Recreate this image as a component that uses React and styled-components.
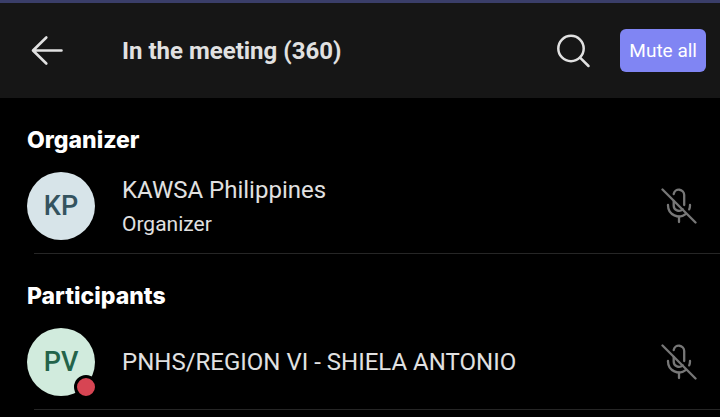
import React from "react";
import styled, { createGlobalStyle } from "styled-components";

const GlobalStyle = createGlobalStyle`
  * {
    box-sizing: border-box;
  }
  body {
    margin: 0;
    background-color: #000;
    font-family: Roboto, "Liberation Sans", sans-serif;
    color: #e1e1e1;
  }
`;

const Screen = styled.div`
  border-top: 3px solid #3a3e69;
`;

const Header = styled.header`
  display: flex;
  align-items: center;
  height: 95px;
  padding: 0 14px 0 28px;
  background-color: #161616;
`;

const IconButton = styled.button`
  display: flex;
  flex: none;
  padding: 0;
  border: 0;
  background: none;
  color: ${(props) => props.$color || "#e1e1e1"};
  cursor: pointer;
`;

const Title = styled.h1`
  flex: 1;
  margin: 0;
  padding-left: 56px;
  font-size: 24px;
  line-height: 28px;
  font-weight: 700;
`;

const MuteAll = styled.button`
  height: 43px;
  margin-left: 28px;
  padding: 0 9px;
  border: 0;
  border-radius: 6px;
  background-color: #8085f3;
  color: #fff;
  font-family: inherit;
  font-size: 19px;
  white-space: nowrap;
  cursor: pointer;
`;

const Section = styled.section`
  padding-top: 28px;
`;

const SectionTitle = styled.h2`
  margin: 0;
  padding-left: 27px;
  color: #fff;
  font-family: Inter, "Liberation Sans", sans-serif;
  font-size: 23px;
  line-height: 28px;
  font-weight: 800;
`;

const List = styled.ul`
  margin: 0;
  padding: 0;
  list-style: none;
`;

const Row = styled.li`
  display: flex;
  align-items: center;
  padding: 18px 23px 13px 27px;
`;

const Divider = styled.hr`
  height: 1px;
  margin: 0 0 0 34px;
  border: 0;
  background-color: #262626;
`;

const Avatar = styled.div`
  position: relative;
  display: flex;
  flex: none;
  align-items: center;
  justify-content: center;
  width: 68px;
  height: 68px;
  border-radius: 50%;
  background-color: ${(props) => props.$bg};
  color: ${(props) => props.$fg};
  font-size: 27px;
  font-weight: 500;
`;

const Presence = styled.span`
  position: absolute;
  right: -3px;
  bottom: -3px;
  width: 24px;
  height: 24px;
  border: 3px solid #000;
  border-radius: 50%;
  background-color: #d74553;
`;

const Info = styled.div`
  flex: 1;
  min-width: 0;
  padding-left: 27px;
`;

const Name = styled.div`
  font-size: 24px;
  line-height: 36px;
`;

const Role = styled.div`
  font-size: 21px;
  line-height: 32px;
`;

const BackIcon = () => (
  <svg width="38" height="36" viewBox="0 0 38 36" fill="none" stroke="currentColor" strokeWidth="2.6" strokeLinecap="round">
    <path d="M33.5 17.500H5.500M18.300 4.500L5 17.500l13.300 13" strokeLinejoin="round" />
  </svg>
);

const SearchIcon = () => (
  <svg width="36" height="36" viewBox="0 0 36 36" fill="none" stroke="currentColor" strokeWidth="2.5" strokeLinecap="round">
    <circle cx="15" cy="15.5" r="12.7" />
    <path d="M24.300 24.800l8.200 8.200" />
  </svg>
);

const MicOffIcon = () => (
  <svg width="36" height="36" viewBox="0 0 36 36" fill="none" stroke="currentColor" strokeWidth="2.3" strokeLinecap="round">
    <path d="M1.500 1.500l33 33" />
    <path d="M12.700 6a5.300 5.300 0 0 1 10.500 1v10" />
    <path d="M12.700 13v4.500a5.300 5.300 0 0 0 9 3.800" />
    <path d="M7 17v.5a11 11 0 0 0 18 8.400M29 17v.5c0 1.400-.3 2.700-.8 3.900" />
    <path d="M18 28.500V34" />
  </svg>
);

const sections = [
  {
    title: "Organizer",
    people: [
      { name: "KAWSA Philippines", role: "Organizer", initials: "KP", bg: "#d7e4e9", fg: "#34535f" },
    ],
  },
  {
    title: "Participants",
    people: [
      { name: "PNHS/REGION VI - SHIELA ANTONIO", initials: "PV", bg: "#d1ebdd", fg: "#23634a", busy: true },
    ],
  },
];

const Person = ({ person }) => (
  <Row>
    <Avatar $bg={person.bg} $fg={person.fg}>
      {person.initials}
      {person.busy && <Presence />}
    </Avatar>
    <Info>
      <Name>{person.name}</Name>
      {person.role && <Role>{person.role}</Role>}
    </Info>
    <IconButton $color="#777" aria-label={`Unmute ${person.name}`}>
      <MicOffIcon />
    </IconButton>
  </Row>
);

const App = () => (
  <Screen>
    <GlobalStyle />
    <Header>
      <IconButton aria-label="Back">
        <BackIcon />
      </IconButton>
      <Title>In the meeting (360)</Title>
      <IconButton aria-label="Search">
        <SearchIcon />
      </IconButton>
      <MuteAll>Mute all</MuteAll>
    </Header>
    <main>
      {sections.map((section) => (
        <Section key={section.title}>
          <SectionTitle>{section.title}</SectionTitle>
          <List>
            {section.people.map((person) => (
              <Person key={person.name} person={person} />
            ))}
          </List>
          <Divider />
        </Section>
      ))}
    </main>
  </Screen>
);

export default App;
